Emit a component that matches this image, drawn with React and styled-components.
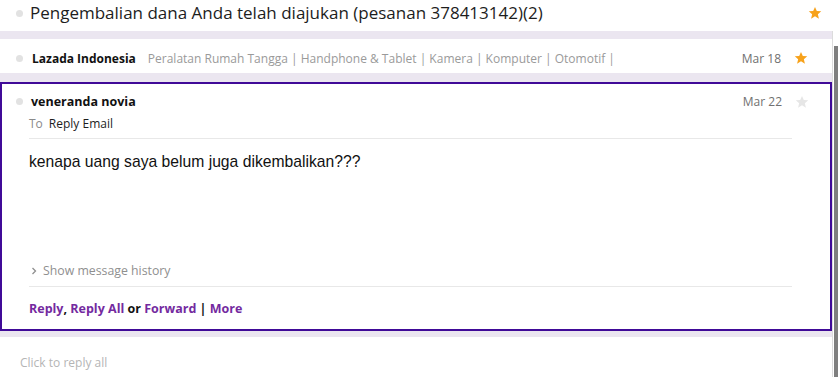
import React from "react";
import styled, { createGlobalStyle } from "styled-components";

const GlobalStyle = createGlobalStyle`
  html, body {
    margin: 0;
    padding: 0;
    background: #ffffff;
    overflow: hidden;
  }
  body {
    font-family: "Open Sans", "Noto Sans", sans-serif;
    color: #1a1a1a;
  }
  * {
    box-sizing: border-box;
  }
`;

const Page = styled.div`
  width: 838px;
  height: 377px;
  display: flex;
  flex-direction: column;
  background: #ffffff;
`;

const SubjectBar = styled.div`
  height: 31px;
  display: flex;
  align-items: center;
  padding: 0 16px 5px 16px;
  gap: 7px;
`;

const Subject = styled.h1`
  flex: 1;
  margin: 0;
  font-size: 17px;
  line-height: 24px;
  font-weight: 400;
  color: #1d1d1d;
  white-space: nowrap;
`;

const Body = styled.div`
  flex: 1;
  display: flex;
  min-height: 0;
`;

const Thread = styled.div`
  flex: 1;
  display: flex;
  flex-direction: column;
  background: #ebe6f0;
  padding-top: 8px;
`;

const Scrollbar = styled.div`
  width: 6px;
  border-left: 1px solid #dcdcdc;
  background: #ffffff;
  padding-top: 15px;
  display: flex;
  justify-content: flex-end;
`;

const Thumb = styled.div`
  width: 4px;
  height: 100%;
  background: #7f7f7f;
`;

const Dot = styled.span`
  width: 7px;
  height: 7px;
  border-radius: 50%;
  background: #e2e2e2;
  flex: none;
`;

const CollapsedRow = styled.div`
  height: 34px;
  background: #ffffff;
  display: flex;
  align-items: center;
  padding: 4px 24px 0 16px;
  margin-bottom: 9px;
`;

const Sender = styled.span`
  font-size: 12px;
  line-height: 17px;
  font-weight: 700;
  color: #111111;
  margin-left: 9px;
  white-space: nowrap;
`;

const Snippet = styled.span`
  flex: 1;
  font-size: 12px;
  line-height: 17px;
  color: #9a9a9a;
  margin-left: 12px;
  white-space: nowrap;
  overflow: hidden;
`;

const DateText = styled.span`
  font-size: 12px;
  line-height: 17px;
  color: #707070;
  white-space: nowrap;
`;

const StarWrap = styled.span`
  display: inline-flex;
  margin-left: ${(p) => p.$gap || 12}px;
`;

const Card = styled.div`
  background: #ffffff;
  border: 2px solid #400a98;
  height: 249px;
  display: flex;
  flex-direction: column;
  padding: 9px 0 0 14px;
`;

const CardHead = styled.div`
  display: flex;
  align-items: center;
  padding-right: 21px;
`;

const Name = styled.span`
  flex: 1;
  font-size: 12.5px;
  line-height: 17px;
  font-weight: 700;
  color: #111111;
  margin-left: 8px;
`;

const Recipients = styled.div`
  margin: 5px 0 0 13px;
  font-size: 12px;
  line-height: 17px;
  color: #1d1d1d;
  display: flex;
  gap: 6px;
`;

const Muted = styled.span`
  color: #8a8a8a;
`;

const Rule = styled.div`
  height: 1px;
  background: #e8e8e8;
  margin: ${(p) => p.$m};
  width: 763px;
`;

const Message = styled.p`
  margin: 13px 0 0 13px;
  font-family: "Liberation Sans", Arial, sans-serif;
  font-size: 15.7px;
  line-height: 19px;
  color: #111111;
  flex: 1;
`;

const History = styled.div`
  margin-left: 15px;
  display: flex;
  align-items: center;
  gap: 6px;
  font-size: 12.3px;
  line-height: 17px;
  color: #8f8f8f;
`;

const Actions = styled.div`
  margin: 13px 0 0 13px;
  padding-bottom: 12px;
  font-size: 12.5px;
  line-height: 17px;
  font-weight: 700;
  color: #111111;
`;

const ActionLink = styled.a`
  color: #742a9f;
  text-decoration: none;
  cursor: pointer;
`;

const Gap = styled.div`
  height: 6px;
  flex: none;
`;

const ReplyBox = styled.div`
  flex: 1;
  background: #ffffff;
  padding: 17px 0 0 20px;
  font-size: 12px;
  line-height: 17px;
  color: #b5b5b5;
`;

function Star({ color, size = 14 }) {
  return (
    <svg width={size} height={size} viewBox="0 0 24 24">
      <path
        d="M12 1.5l3.1 7.1 7.6.6-5.8 5 1.8 7.5L12 17.7l-6.7 4 1.8-7.5-5.8-5 7.6-.6z"
        fill={color}
      />
    </svg>
  );
}

export default function App() {
  return (
    <Page>
      <GlobalStyle />
      <SubjectBar>
        <Dot />
        <Subject>Pengembalian dana Anda telah diajukan (pesanan 378413142)(2)</Subject>
        <Star color="#f7a21b" />
      </SubjectBar>
      <Body>
        <Thread>
          <CollapsedRow>
            <Dot />
            <Sender>Lazada Indonesia</Sender>
            <Snippet>
              Peralatan Rumah Tangga | Handphone &amp; Tablet | Kamera | Komputer | Otomotif |
            </Snippet>
            <DateText>Mar 18</DateText>
            <StarWrap $gap={13}>
              <Star color="#f7a21b" />
            </StarWrap>
          </CollapsedRow>
          <Card>
            <CardHead>
              <Dot />
              <Name>veneranda novia</Name>
              <DateText>Mar 22</DateText>
              <StarWrap $gap={13}>
                <Star color="#e6e6e6" />
              </StarWrap>
            </CardHead>
            <Recipients>
              <Muted>To</Muted>
              <span>Reply Email</span>
            </Recipients>
            <Rule $m="6px 0 0 13px" />
            <Message>kenapa uang saya belum juga dikembalikan???</Message>
            <History>
              <svg width="6" height="8" viewBox="0 0 6 8">
                <path d="M1.5 1l3 3-3 3" stroke="#8f8f8f" strokeWidth="1.3" fill="none" />
              </svg>
              Show message history
            </History>
            <Rule $m="7px 0 0 13px" />
            <Actions>
              <ActionLink>Reply</ActionLink>, <ActionLink>Reply All</ActionLink> or{" "}
              <ActionLink>Forward</ActionLink> | <ActionLink>More</ActionLink>
            </Actions>
          </Card>
          <Gap />
          <ReplyBox>Click to reply all</ReplyBox>
        </Thread>
        <Scrollbar>
          <Thumb />
        </Scrollbar>
      </Body>
    </Page>
  );
}
